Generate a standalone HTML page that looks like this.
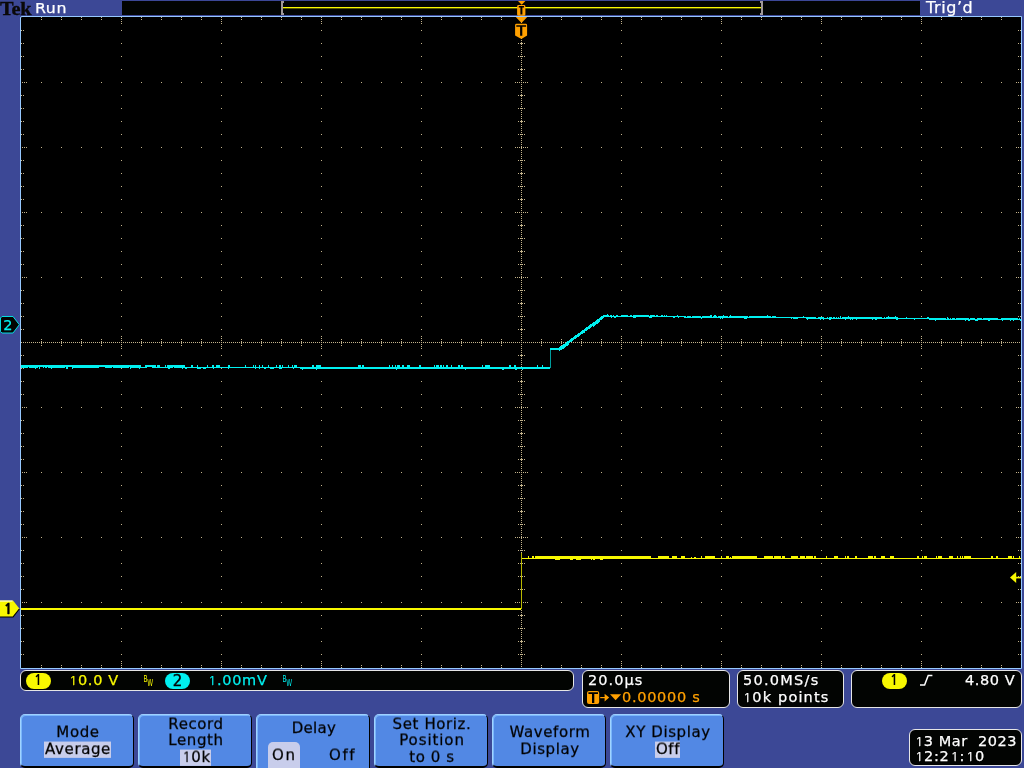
<!DOCTYPE html>
<html lang="en">
<head>
<meta charset="utf-8">
<title>Tek oscilloscope</title>
<style>
html,body{margin:0;padding:0;}
body{width:1024px;height:768px;overflow:hidden;background:#3c4896;position:relative;
 font-family:"DejaVu Sans","Liberation Sans",sans-serif;font-size:14.5px;color:#fff;}
.abs{position:absolute;}
.t{position:absolute;will-change:transform;white-space:pre;line-height:20px;height:20px;letter-spacing:.55px;-webkit-text-stroke:.25px currentColor;}
#tek{left:-0.4px;top:-2.9px;font-family:"Liberation Serif",serif;font-weight:bold;font-size:19.6px;color:#0a0808;letter-spacing:-0.3px;-webkit-text-stroke:.35px #0a0808;transform:scaleX(1.04);transform-origin:0 0;line-height:24px;height:24px;}
#topbar{left:122px;top:1px;width:798px;height:14px;background:#020402;}
#grat{left:20px;top:16px;width:1000px;height:651px;background:#000;border:1px solid #96c8ff;border-radius:2px 0 0 0;}
#scope{left:0;top:0;}
.box{position:absolute;background:#020402;border:1px solid #e6e6e6;border-radius:6px;box-sizing:border-box;}
.btn{position:absolute;top:714px;width:114px;height:54px;box-sizing:border-box;background:#5288e4;border-radius:5px;border-top:1px solid #a0d0ff;border-left:1px solid #a0d4ff;border-right:1px solid #000;border-bottom:2px solid #000;box-shadow:inset 1px 1px 0 #7ab6fb;color:#000;}
.btn .t{color:#000;text-align:center;left:0.8px;width:112px;margin-top:.9px;font-size:15px;letter-spacing:.6px;transform:scaleY(.96);transform-origin:0 15.2px;}
.hl{background:linear-gradient(transparent 1.5px,#c8cdeb 1.5px);padding-left:1.2px;margin-left:-1.2px;}
.onbox{background:#c8cdeb;border-radius:5px 5px 0 0;}
.btn.tall{height:60px;}
.one{font-family:"NanumGothic","Liberation Sans",sans-serif;font-size:13.2px;line-height:0;margin-left:1.2px;margin-right:0;}
.btn .one{font-size:13.6px;}
.pill{will-change:transform;position:absolute;width:25px;height:16px;border-radius:8px;color:#000;text-align:center;line-height:16px;font-size:15px;-webkit-text-stroke:.4px #000;}
.pill.p1{font-family:"NanumGothic","Liberation Sans",sans-serif;font-weight:bold;font-size:14.4px;-webkit-text-stroke:0;text-indent:-1px;line-height:15.6px;}
</style>
</head>
<body>
<div id="tek" class="t">Tek</div>
<div class="t" style="left:34.9px;top:-2.4px;font-size:14.6px;transform:scaleX(1.08);transform-origin:0 0;">Run</div>
<div id="topbar" class="abs"></div>
<div class="t" style="left:925.6px;top:-2.2px;font-size:15px;transform:scaleX(1.065);transform-origin:0 0;">Trig’d</div>
<div id="grat" class="abs"></div>
<svg id="scope" class="abs" width="1024" height="768" viewBox="0 0 1024 768" shape-rendering="crispEdges">
<path fill="#c4b48c" d="M41 17h1v1h-1zM61 17h1v1h-1zM81 17h1v1h-1zM101 17h1v1h-1zM121 17h1v1h-1zM141 17h1v1h-1zM161 17h1v1h-1zM181 17h1v1h-1zM201 17h1v1h-1zM221 17h1v1h-1zM241 17h1v1h-1zM261 17h1v1h-1zM281 17h1v1h-1zM301 17h1v1h-1zM321 17h1v1h-1zM341 17h1v1h-1zM361 17h1v1h-1zM381 17h1v1h-1zM401 17h1v1h-1zM421 17h1v1h-1zM441 17h1v1h-1zM461 17h1v1h-1zM481 17h1v1h-1zM501 17h1v1h-1zM541 17h1v1h-1zM561 17h1v1h-1zM581 17h1v1h-1zM601 17h1v1h-1zM621 17h1v1h-1zM641 17h1v1h-1zM661 17h1v1h-1zM681 17h1v1h-1zM701 17h1v1h-1zM721 17h1v1h-1zM741 17h1v1h-1zM761 17h1v1h-1zM781 17h1v1h-1zM801 17h1v1h-1zM821 17h1v1h-1zM841 17h1v1h-1zM861 17h1v1h-1zM881 17h1v1h-1zM901 17h1v1h-1zM921 17h1v1h-1zM941 17h1v1h-1zM961 17h1v1h-1zM981 17h1v1h-1zM1001 17h1v1h-1zM521 18h1v1h-1zM41 19h1v1h-1zM61 19h1v1h-1zM81 19h1v1h-1zM101 19h1v1h-1zM121 19h1v1h-1zM141 19h1v1h-1zM161 19h1v1h-1zM181 19h1v1h-1zM201 19h1v1h-1zM221 19h1v1h-1zM241 19h1v1h-1zM261 19h1v1h-1zM281 19h1v1h-1zM301 19h1v1h-1zM321 19h1v1h-1zM341 19h1v1h-1zM361 19h1v1h-1zM381 19h1v1h-1zM401 19h1v1h-1zM421 19h1v1h-1zM441 19h1v1h-1zM461 19h1v1h-1zM481 19h1v1h-1zM501 19h1v1h-1zM541 19h1v1h-1zM561 19h1v1h-1zM581 19h1v1h-1zM601 19h1v1h-1zM621 19h1v1h-1zM641 19h1v1h-1zM661 19h1v1h-1zM681 19h1v1h-1zM701 19h1v1h-1zM721 19h1v1h-1zM741 19h1v1h-1zM761 19h1v1h-1zM781 19h1v1h-1zM801 19h1v1h-1zM821 19h1v1h-1zM841 19h1v1h-1zM861 19h1v1h-1zM881 19h1v1h-1zM901 19h1v1h-1zM921 19h1v1h-1zM941 19h1v1h-1zM961 19h1v1h-1zM981 19h1v1h-1zM1001 19h1v1h-1zM521 20h1v1h-1zM121 21h1v1h-1zM221 21h1v1h-1zM321 21h1v1h-1zM421 21h1v1h-1zM621 21h1v1h-1zM721 21h1v1h-1zM821 21h1v1h-1zM921 21h1v1h-1zM521 22h1v1h-1zM121 23h1v1h-1zM221 23h1v1h-1zM321 23h1v1h-1zM421 23h1v1h-1zM621 23h1v1h-1zM721 23h1v1h-1zM821 23h1v1h-1zM921 23h1v1h-1zM521 24h1v1h-1zM521 26h1v1h-1zM521 28h1v1h-1zM21 30h1v1h-1zM23 30h1v1h-1zM121 30h1v1h-1zM221 30h1v1h-1zM321 30h1v1h-1zM421 30h1v1h-1zM518 30h1v1h-1zM520 30h3v1h-3zM524 30h1v1h-1zM621 30h1v1h-1zM721 30h1v1h-1zM821 30h1v1h-1zM921 30h1v1h-1zM1018 30h1v1h-1zM1020 30h1v1h-1zM521 32h1v1h-1zM521 34h1v1h-1zM521 36h1v1h-1zM521 38h1v1h-1zM521 40h1v1h-1zM521 42h1v1h-1zM21 43h1v1h-1zM23 43h1v1h-1zM121 43h1v1h-1zM221 43h1v1h-1zM321 43h1v1h-1zM421 43h1v1h-1zM518 43h1v1h-1zM520 43h3v1h-3zM524 43h1v1h-1zM621 43h1v1h-1zM721 43h1v1h-1zM821 43h1v1h-1zM921 43h1v1h-1zM1018 43h1v1h-1zM1020 43h1v1h-1zM521 44h1v1h-1zM521 46h1v1h-1zM521 48h1v1h-1zM521 50h1v1h-1zM521 52h1v1h-1zM521 54h1v1h-1zM21 56h1v1h-1zM23 56h1v1h-1zM121 56h1v1h-1zM221 56h1v1h-1zM321 56h1v1h-1zM421 56h1v1h-1zM518 56h1v1h-1zM520 56h3v1h-3zM524 56h1v1h-1zM621 56h1v1h-1zM721 56h1v1h-1zM821 56h1v1h-1zM921 56h1v1h-1zM1018 56h1v1h-1zM1020 56h1v1h-1zM521 58h1v1h-1zM521 60h1v1h-1zM521 62h1v1h-1zM521 64h1v1h-1zM521 66h1v1h-1zM521 68h1v1h-1zM21 69h1v1h-1zM23 69h1v1h-1zM121 69h1v1h-1zM221 69h1v1h-1zM321 69h1v1h-1zM421 69h1v1h-1zM518 69h1v1h-1zM520 69h3v1h-3zM524 69h1v1h-1zM621 69h1v1h-1zM721 69h1v1h-1zM821 69h1v1h-1zM921 69h1v1h-1zM1018 69h1v1h-1zM1020 69h1v1h-1zM521 70h1v1h-1zM521 72h1v1h-1zM521 74h1v1h-1zM521 76h1v1h-1zM521 78h1v1h-1zM521 80h1v1h-1zM22 82h1v1h-1zM24 82h1v1h-1zM26 82h1v1h-1zM41 82h1v1h-1zM61 82h1v1h-1zM81 82h1v1h-1zM101 82h1v1h-1zM121 82h1v1h-1zM141 82h1v1h-1zM161 82h1v1h-1zM181 82h1v1h-1zM201 82h1v1h-1zM221 82h1v1h-1zM241 82h1v1h-1zM261 82h1v1h-1zM281 82h1v1h-1zM301 82h1v1h-1zM321 82h1v1h-1zM341 82h1v1h-1zM361 82h1v1h-1zM381 82h1v1h-1zM401 82h1v1h-1zM421 82h1v1h-1zM441 82h1v1h-1zM461 82h1v1h-1zM481 82h1v1h-1zM501 82h1v1h-1zM515 82h1v1h-1zM517 82h1v1h-1zM519 82h1v1h-1zM521 82h1v1h-1zM523 82h1v1h-1zM525 82h1v1h-1zM527 82h1v1h-1zM541 82h1v1h-1zM561 82h1v1h-1zM581 82h1v1h-1zM601 82h1v1h-1zM621 82h1v1h-1zM641 82h1v1h-1zM661 82h1v1h-1zM681 82h1v1h-1zM701 82h1v1h-1zM721 82h1v1h-1zM741 82h1v1h-1zM761 82h1v1h-1zM781 82h1v1h-1zM801 82h1v1h-1zM821 82h1v1h-1zM841 82h1v1h-1zM861 82h1v1h-1zM881 82h1v1h-1zM901 82h1v1h-1zM921 82h1v1h-1zM941 82h1v1h-1zM961 82h1v1h-1zM981 82h1v1h-1zM1001 82h1v1h-1zM1016 82h1v1h-1zM1018 82h1v1h-1zM1020 82h1v1h-1zM521 84h1v1h-1zM521 86h1v1h-1zM521 88h1v1h-1zM521 90h1v1h-1zM521 92h1v1h-1zM521 94h1v1h-1zM21 95h1v1h-1zM23 95h1v1h-1zM121 95h1v1h-1zM221 95h1v1h-1zM321 95h1v1h-1zM421 95h1v1h-1zM518 95h1v1h-1zM520 95h3v1h-3zM524 95h1v1h-1zM621 95h1v1h-1zM721 95h1v1h-1zM821 95h1v1h-1zM921 95h1v1h-1zM1018 95h1v1h-1zM1020 95h1v1h-1zM521 96h1v1h-1zM521 98h1v1h-1zM521 100h1v1h-1zM521 102h1v1h-1zM521 104h1v1h-1zM521 106h1v1h-1zM21 108h1v1h-1zM23 108h1v1h-1zM121 108h1v1h-1zM221 108h1v1h-1zM321 108h1v1h-1zM421 108h1v1h-1zM518 108h1v1h-1zM520 108h3v1h-3zM524 108h1v1h-1zM621 108h1v1h-1zM721 108h1v1h-1zM821 108h1v1h-1zM921 108h1v1h-1zM1018 108h1v1h-1zM1020 108h1v1h-1zM521 110h1v1h-1zM521 112h1v1h-1zM521 114h1v1h-1zM521 116h1v1h-1zM521 118h1v1h-1zM521 120h1v1h-1zM21 121h1v1h-1zM23 121h1v1h-1zM121 121h1v1h-1zM221 121h1v1h-1zM321 121h1v1h-1zM421 121h1v1h-1zM518 121h1v1h-1zM520 121h3v1h-3zM524 121h1v1h-1zM621 121h1v1h-1zM721 121h1v1h-1zM821 121h1v1h-1zM921 121h1v1h-1zM1018 121h1v1h-1zM1020 121h1v1h-1zM521 122h1v1h-1zM521 124h1v1h-1zM521 126h1v1h-1zM521 128h1v1h-1zM521 130h1v1h-1zM521 132h1v1h-1zM21 134h1v1h-1zM23 134h1v1h-1zM121 134h1v1h-1zM221 134h1v1h-1zM321 134h1v1h-1zM421 134h1v1h-1zM518 134h1v1h-1zM520 134h3v1h-3zM524 134h1v1h-1zM621 134h1v1h-1zM721 134h1v1h-1zM821 134h1v1h-1zM921 134h1v1h-1zM1018 134h1v1h-1zM1020 134h1v1h-1zM521 136h1v1h-1zM521 138h1v1h-1zM521 140h1v1h-1zM521 142h1v1h-1zM521 144h1v1h-1zM521 146h1v1h-1zM22 147h1v1h-1zM24 147h1v1h-1zM26 147h1v1h-1zM41 147h1v1h-1zM61 147h1v1h-1zM81 147h1v1h-1zM101 147h1v1h-1zM121 147h1v1h-1zM141 147h1v1h-1zM161 147h1v1h-1zM181 147h1v1h-1zM201 147h1v1h-1zM221 147h1v1h-1zM241 147h1v1h-1zM261 147h1v1h-1zM281 147h1v1h-1zM301 147h1v1h-1zM321 147h1v1h-1zM341 147h1v1h-1zM361 147h1v1h-1zM381 147h1v1h-1zM401 147h1v1h-1zM421 147h1v1h-1zM441 147h1v1h-1zM461 147h1v1h-1zM481 147h1v1h-1zM501 147h1v1h-1zM515 147h1v1h-1zM517 147h1v1h-1zM519 147h1v1h-1zM521 147h1v1h-1zM523 147h1v1h-1zM525 147h1v1h-1zM527 147h1v1h-1zM541 147h1v1h-1zM561 147h1v1h-1zM581 147h1v1h-1zM601 147h1v1h-1zM621 147h1v1h-1zM641 147h1v1h-1zM661 147h1v1h-1zM681 147h1v1h-1zM701 147h1v1h-1zM721 147h1v1h-1zM741 147h1v1h-1zM761 147h1v1h-1zM781 147h1v1h-1zM801 147h1v1h-1zM821 147h1v1h-1zM841 147h1v1h-1zM861 147h1v1h-1zM881 147h1v1h-1zM901 147h1v1h-1zM921 147h1v1h-1zM941 147h1v1h-1zM961 147h1v1h-1zM981 147h1v1h-1zM1001 147h1v1h-1zM1016 147h1v1h-1zM1018 147h1v1h-1zM1020 147h1v1h-1zM521 148h1v1h-1zM521 150h1v1h-1zM521 152h1v1h-1zM521 154h1v1h-1zM521 156h1v1h-1zM521 158h1v1h-1zM21 160h1v1h-1zM23 160h1v1h-1zM121 160h1v1h-1zM221 160h1v1h-1zM321 160h1v1h-1zM421 160h1v1h-1zM518 160h1v1h-1zM520 160h3v1h-3zM524 160h1v1h-1zM621 160h1v1h-1zM721 160h1v1h-1zM821 160h1v1h-1zM921 160h1v1h-1zM1018 160h1v1h-1zM1020 160h1v1h-1zM521 162h1v1h-1zM521 164h1v1h-1zM521 166h1v1h-1zM521 168h1v1h-1zM521 170h1v1h-1zM521 172h1v1h-1zM21 173h1v1h-1zM23 173h1v1h-1zM121 173h1v1h-1zM221 173h1v1h-1zM321 173h1v1h-1zM421 173h1v1h-1zM518 173h1v1h-1zM520 173h3v1h-3zM524 173h1v1h-1zM621 173h1v1h-1zM721 173h1v1h-1zM821 173h1v1h-1zM921 173h1v1h-1zM1018 173h1v1h-1zM1020 173h1v1h-1zM521 174h1v1h-1zM521 176h1v1h-1zM521 178h1v1h-1zM521 180h1v1h-1zM521 182h1v1h-1zM521 184h1v1h-1zM21 186h1v1h-1zM23 186h1v1h-1zM121 186h1v1h-1zM221 186h1v1h-1zM321 186h1v1h-1zM421 186h1v1h-1zM518 186h1v1h-1zM520 186h3v1h-3zM524 186h1v1h-1zM621 186h1v1h-1zM721 186h1v1h-1zM821 186h1v1h-1zM921 186h1v1h-1zM1018 186h1v1h-1zM1020 186h1v1h-1zM521 188h1v1h-1zM521 190h1v1h-1zM521 192h1v1h-1zM521 194h1v1h-1zM521 196h1v1h-1zM521 198h1v1h-1zM21 199h1v1h-1zM23 199h1v1h-1zM121 199h1v1h-1zM221 199h1v1h-1zM321 199h1v1h-1zM421 199h1v1h-1zM518 199h1v1h-1zM520 199h3v1h-3zM524 199h1v1h-1zM621 199h1v1h-1zM721 199h1v1h-1zM821 199h1v1h-1zM921 199h1v1h-1zM1018 199h1v1h-1zM1020 199h1v1h-1zM521 200h1v1h-1zM521 202h1v1h-1zM521 204h1v1h-1zM521 206h1v1h-1zM521 208h1v1h-1zM521 210h1v1h-1zM22 212h1v1h-1zM24 212h1v1h-1zM26 212h1v1h-1zM41 212h1v1h-1zM61 212h1v1h-1zM81 212h1v1h-1zM101 212h1v1h-1zM121 212h1v1h-1zM141 212h1v1h-1zM161 212h1v1h-1zM181 212h1v1h-1zM201 212h1v1h-1zM221 212h1v1h-1zM241 212h1v1h-1zM261 212h1v1h-1zM281 212h1v1h-1zM301 212h1v1h-1zM321 212h1v1h-1zM341 212h1v1h-1zM361 212h1v1h-1zM381 212h1v1h-1zM401 212h1v1h-1zM421 212h1v1h-1zM441 212h1v1h-1zM461 212h1v1h-1zM481 212h1v1h-1zM501 212h1v1h-1zM515 212h1v1h-1zM517 212h1v1h-1zM519 212h1v1h-1zM521 212h1v1h-1zM523 212h1v1h-1zM525 212h1v1h-1zM527 212h1v1h-1zM541 212h1v1h-1zM561 212h1v1h-1zM581 212h1v1h-1zM601 212h1v1h-1zM621 212h1v1h-1zM641 212h1v1h-1zM661 212h1v1h-1zM681 212h1v1h-1zM701 212h1v1h-1zM721 212h1v1h-1zM741 212h1v1h-1zM761 212h1v1h-1zM781 212h1v1h-1zM801 212h1v1h-1zM821 212h1v1h-1zM841 212h1v1h-1zM861 212h1v1h-1zM881 212h1v1h-1zM901 212h1v1h-1zM921 212h1v1h-1zM941 212h1v1h-1zM961 212h1v1h-1zM981 212h1v1h-1zM1001 212h1v1h-1zM1016 212h1v1h-1zM1018 212h1v1h-1zM1020 212h1v1h-1zM521 214h1v1h-1zM521 216h1v1h-1zM521 218h1v1h-1zM521 220h1v1h-1zM521 222h1v1h-1zM521 224h1v1h-1zM21 225h1v1h-1zM23 225h1v1h-1zM121 225h1v1h-1zM221 225h1v1h-1zM321 225h1v1h-1zM421 225h1v1h-1zM518 225h1v1h-1zM520 225h3v1h-3zM524 225h1v1h-1zM621 225h1v1h-1zM721 225h1v1h-1zM821 225h1v1h-1zM921 225h1v1h-1zM1018 225h1v1h-1zM1020 225h1v1h-1zM521 226h1v1h-1zM521 228h1v1h-1zM521 230h1v1h-1zM521 232h1v1h-1zM521 234h1v1h-1zM521 236h1v1h-1zM21 238h1v1h-1zM23 238h1v1h-1zM121 238h1v1h-1zM221 238h1v1h-1zM321 238h1v1h-1zM421 238h1v1h-1zM518 238h1v1h-1zM520 238h3v1h-3zM524 238h1v1h-1zM621 238h1v1h-1zM721 238h1v1h-1zM821 238h1v1h-1zM921 238h1v1h-1zM1018 238h1v1h-1zM1020 238h1v1h-1zM521 240h1v1h-1zM521 242h1v1h-1zM521 244h1v1h-1zM521 246h1v1h-1zM521 248h1v1h-1zM521 250h1v1h-1zM21 251h1v1h-1zM23 251h1v1h-1zM121 251h1v1h-1zM221 251h1v1h-1zM321 251h1v1h-1zM421 251h1v1h-1zM518 251h1v1h-1zM520 251h3v1h-3zM524 251h1v1h-1zM621 251h1v1h-1zM721 251h1v1h-1zM821 251h1v1h-1zM921 251h1v1h-1zM1018 251h1v1h-1zM1020 251h1v1h-1zM521 252h1v1h-1zM521 254h1v1h-1zM521 256h1v1h-1zM521 258h1v1h-1zM521 260h1v1h-1zM521 262h1v1h-1zM21 264h1v1h-1zM23 264h1v1h-1zM121 264h1v1h-1zM221 264h1v1h-1zM321 264h1v1h-1zM421 264h1v1h-1zM518 264h1v1h-1zM520 264h3v1h-3zM524 264h1v1h-1zM621 264h1v1h-1zM721 264h1v1h-1zM821 264h1v1h-1zM921 264h1v1h-1zM1018 264h1v1h-1zM1020 264h1v1h-1zM521 266h1v1h-1zM521 268h1v1h-1zM521 270h1v1h-1zM521 272h1v1h-1zM521 274h1v1h-1zM521 276h1v1h-1zM22 277h1v1h-1zM24 277h1v1h-1zM26 277h1v1h-1zM41 277h1v1h-1zM61 277h1v1h-1zM81 277h1v1h-1zM101 277h1v1h-1zM121 277h1v1h-1zM141 277h1v1h-1zM161 277h1v1h-1zM181 277h1v1h-1zM201 277h1v1h-1zM221 277h1v1h-1zM241 277h1v1h-1zM261 277h1v1h-1zM281 277h1v1h-1zM301 277h1v1h-1zM321 277h1v1h-1zM341 277h1v1h-1zM361 277h1v1h-1zM381 277h1v1h-1zM401 277h1v1h-1zM421 277h1v1h-1zM441 277h1v1h-1zM461 277h1v1h-1zM481 277h1v1h-1zM501 277h1v1h-1zM515 277h1v1h-1zM517 277h1v1h-1zM519 277h1v1h-1zM521 277h1v1h-1zM523 277h1v1h-1zM525 277h1v1h-1zM527 277h1v1h-1zM541 277h1v1h-1zM561 277h1v1h-1zM581 277h1v1h-1zM601 277h1v1h-1zM621 277h1v1h-1zM641 277h1v1h-1zM661 277h1v1h-1zM681 277h1v1h-1zM701 277h1v1h-1zM721 277h1v1h-1zM741 277h1v1h-1zM761 277h1v1h-1zM781 277h1v1h-1zM801 277h1v1h-1zM821 277h1v1h-1zM841 277h1v1h-1zM861 277h1v1h-1zM881 277h1v1h-1zM901 277h1v1h-1zM921 277h1v1h-1zM941 277h1v1h-1zM961 277h1v1h-1zM981 277h1v1h-1zM1001 277h1v1h-1zM1016 277h1v1h-1zM1018 277h1v1h-1zM1020 277h1v1h-1zM521 278h1v1h-1zM521 280h1v1h-1zM521 282h1v1h-1zM521 284h1v1h-1zM521 286h1v1h-1zM521 288h1v1h-1zM21 290h1v1h-1zM23 290h1v1h-1zM121 290h1v1h-1zM221 290h1v1h-1zM321 290h1v1h-1zM421 290h1v1h-1zM518 290h1v1h-1zM520 290h3v1h-3zM524 290h1v1h-1zM621 290h1v1h-1zM721 290h1v1h-1zM821 290h1v1h-1zM921 290h1v1h-1zM1018 290h1v1h-1zM1020 290h1v1h-1zM521 292h1v1h-1zM521 294h1v1h-1zM521 296h1v1h-1zM521 298h1v1h-1zM521 300h1v1h-1zM521 302h1v1h-1zM21 303h1v1h-1zM23 303h1v1h-1zM121 303h1v1h-1zM221 303h1v1h-1zM321 303h1v1h-1zM421 303h1v1h-1zM518 303h1v1h-1zM520 303h3v1h-3zM524 303h1v1h-1zM621 303h1v1h-1zM721 303h1v1h-1zM821 303h1v1h-1zM921 303h1v1h-1zM1018 303h1v1h-1zM1020 303h1v1h-1zM521 304h1v1h-1zM521 306h1v1h-1zM521 308h1v1h-1zM521 310h1v1h-1zM521 312h1v1h-1zM521 314h1v1h-1zM21 316h1v1h-1zM23 316h1v1h-1zM121 316h1v1h-1zM221 316h1v1h-1zM321 316h1v1h-1zM421 316h1v1h-1zM518 316h1v1h-1zM520 316h3v1h-3zM524 316h1v1h-1zM621 316h1v1h-1zM721 316h1v1h-1zM821 316h1v1h-1zM921 316h1v1h-1zM1018 316h1v1h-1zM1020 316h1v1h-1zM521 318h1v1h-1zM521 320h1v1h-1zM521 322h1v1h-1zM521 324h1v1h-1zM521 326h1v1h-1zM521 328h1v1h-1zM21 329h1v1h-1zM23 329h1v1h-1zM121 329h1v1h-1zM221 329h1v1h-1zM321 329h1v1h-1zM421 329h1v1h-1zM518 329h1v1h-1zM520 329h3v1h-3zM524 329h1v1h-1zM621 329h1v1h-1zM721 329h1v1h-1zM821 329h1v1h-1zM921 329h1v1h-1zM1018 329h1v1h-1zM1020 329h1v1h-1zM521 330h1v1h-1zM521 332h1v1h-1zM521 334h1v1h-1zM121 336h1v1h-1zM221 336h1v1h-1zM321 336h1v1h-1zM421 336h1v1h-1zM521 336h1v1h-1zM621 336h1v1h-1zM721 336h1v1h-1zM821 336h1v1h-1zM921 336h1v1h-1zM121 338h1v1h-1zM221 338h1v1h-1zM321 338h1v1h-1zM421 338h1v1h-1zM521 338h1v1h-1zM621 338h1v1h-1zM721 338h1v1h-1zM821 338h1v1h-1zM921 338h1v1h-1zM41 339h1v1h-1zM61 339h1v1h-1zM81 339h1v1h-1zM101 339h1v1h-1zM141 339h1v1h-1zM161 339h1v1h-1zM181 339h1v1h-1zM201 339h1v1h-1zM241 339h1v1h-1zM261 339h1v1h-1zM281 339h1v1h-1zM301 339h1v1h-1zM341 339h1v1h-1zM361 339h1v1h-1zM381 339h1v1h-1zM401 339h1v1h-1zM441 339h1v1h-1zM461 339h1v1h-1zM481 339h1v1h-1zM501 339h1v1h-1zM541 339h1v1h-1zM561 339h1v1h-1zM581 339h1v1h-1zM601 339h1v1h-1zM641 339h1v1h-1zM661 339h1v1h-1zM681 339h1v1h-1zM701 339h1v1h-1zM741 339h1v1h-1zM761 339h1v1h-1zM781 339h1v1h-1zM801 339h1v1h-1zM841 339h1v1h-1zM861 339h1v1h-1zM881 339h1v1h-1zM901 339h1v1h-1zM941 339h1v1h-1zM961 339h1v1h-1zM981 339h1v1h-1zM1001 339h1v1h-1zM121 340h1v1h-1zM221 340h1v1h-1zM321 340h1v1h-1zM421 340h1v1h-1zM521 340h1v1h-1zM621 340h1v1h-1zM721 340h1v1h-1zM821 340h1v1h-1zM921 340h1v1h-1zM41 341h1v1h-1zM61 341h1v1h-1zM81 341h1v1h-1zM101 341h1v1h-1zM141 341h1v1h-1zM161 341h1v1h-1zM181 341h1v1h-1zM201 341h1v1h-1zM241 341h1v1h-1zM261 341h1v1h-1zM281 341h1v1h-1zM301 341h1v1h-1zM341 341h1v1h-1zM361 341h1v1h-1zM381 341h1v1h-1zM401 341h1v1h-1zM441 341h1v1h-1zM461 341h1v1h-1zM481 341h1v1h-1zM501 341h1v1h-1zM541 341h1v1h-1zM561 341h1v1h-1zM581 341h1v1h-1zM601 341h1v1h-1zM641 341h1v1h-1zM661 341h1v1h-1zM681 341h1v1h-1zM701 341h1v1h-1zM741 341h1v1h-1zM761 341h1v1h-1zM781 341h1v1h-1zM801 341h1v1h-1zM841 341h1v1h-1zM861 341h1v1h-1zM881 341h1v1h-1zM901 341h1v1h-1zM941 341h1v1h-1zM961 341h1v1h-1zM981 341h1v1h-1zM1001 341h1v1h-1zM21 342h1v1h-1zM23 342h1v1h-1zM25 342h1v1h-1zM27 342h1v1h-1zM29 342h1v1h-1zM31 342h1v1h-1zM33 342h1v1h-1zM35 342h1v1h-1zM37 342h1v1h-1zM39 342h1v1h-1zM41 342h1v1h-1zM43 342h1v1h-1zM45 342h1v1h-1zM47 342h1v1h-1zM49 342h1v1h-1zM51 342h1v1h-1zM53 342h1v1h-1zM55 342h1v1h-1zM57 342h1v1h-1zM59 342h1v1h-1zM61 342h1v1h-1zM63 342h1v1h-1zM65 342h1v1h-1zM67 342h1v1h-1zM69 342h1v1h-1zM71 342h1v1h-1zM73 342h1v1h-1zM75 342h1v1h-1zM77 342h1v1h-1zM79 342h1v1h-1zM81 342h1v1h-1zM83 342h1v1h-1zM85 342h1v1h-1zM87 342h1v1h-1zM89 342h1v1h-1zM91 342h1v1h-1zM93 342h1v1h-1zM95 342h1v1h-1zM97 342h1v1h-1zM99 342h1v1h-1zM101 342h1v1h-1zM103 342h1v1h-1zM105 342h1v1h-1zM107 342h1v1h-1zM109 342h1v1h-1zM111 342h1v1h-1zM113 342h1v1h-1zM115 342h1v1h-1zM117 342h1v1h-1zM119 342h1v1h-1zM121 342h1v1h-1zM123 342h1v1h-1zM125 342h1v1h-1zM127 342h1v1h-1zM129 342h1v1h-1zM131 342h1v1h-1zM133 342h1v1h-1zM135 342h1v1h-1zM137 342h1v1h-1zM139 342h1v1h-1zM141 342h1v1h-1zM143 342h1v1h-1zM145 342h1v1h-1zM147 342h1v1h-1zM149 342h1v1h-1zM151 342h1v1h-1zM153 342h1v1h-1zM155 342h1v1h-1zM157 342h1v1h-1zM159 342h1v1h-1zM161 342h1v1h-1zM163 342h1v1h-1zM165 342h1v1h-1zM167 342h1v1h-1zM169 342h1v1h-1zM171 342h1v1h-1zM173 342h1v1h-1zM175 342h1v1h-1zM177 342h1v1h-1zM179 342h1v1h-1zM181 342h1v1h-1zM183 342h1v1h-1zM185 342h1v1h-1zM187 342h1v1h-1zM189 342h1v1h-1zM191 342h1v1h-1zM193 342h1v1h-1zM195 342h1v1h-1zM197 342h1v1h-1zM199 342h1v1h-1zM201 342h1v1h-1zM203 342h1v1h-1zM205 342h1v1h-1zM207 342h1v1h-1zM209 342h1v1h-1zM211 342h1v1h-1zM213 342h1v1h-1zM215 342h1v1h-1zM217 342h1v1h-1zM219 342h1v1h-1zM221 342h1v1h-1zM223 342h1v1h-1zM225 342h1v1h-1zM227 342h1v1h-1zM229 342h1v1h-1zM231 342h1v1h-1zM233 342h1v1h-1zM235 342h1v1h-1zM237 342h1v1h-1zM239 342h1v1h-1zM241 342h1v1h-1zM243 342h1v1h-1zM245 342h1v1h-1zM247 342h1v1h-1zM249 342h1v1h-1zM251 342h1v1h-1zM253 342h1v1h-1zM255 342h1v1h-1zM257 342h1v1h-1zM259 342h1v1h-1zM261 342h1v1h-1zM263 342h1v1h-1zM265 342h1v1h-1zM267 342h1v1h-1zM269 342h1v1h-1zM271 342h1v1h-1zM273 342h1v1h-1zM275 342h1v1h-1zM277 342h1v1h-1zM279 342h1v1h-1zM281 342h1v1h-1zM283 342h1v1h-1zM285 342h1v1h-1zM287 342h1v1h-1zM289 342h1v1h-1zM291 342h1v1h-1zM293 342h1v1h-1zM295 342h1v1h-1zM297 342h1v1h-1zM299 342h1v1h-1zM301 342h1v1h-1zM303 342h1v1h-1zM305 342h1v1h-1zM307 342h1v1h-1zM309 342h1v1h-1zM311 342h1v1h-1zM313 342h1v1h-1zM315 342h1v1h-1zM317 342h1v1h-1zM319 342h1v1h-1zM321 342h1v1h-1zM323 342h1v1h-1zM325 342h1v1h-1zM327 342h1v1h-1zM329 342h1v1h-1zM331 342h1v1h-1zM333 342h1v1h-1zM335 342h1v1h-1zM337 342h1v1h-1zM339 342h1v1h-1zM341 342h1v1h-1zM343 342h1v1h-1zM345 342h1v1h-1zM347 342h1v1h-1zM349 342h1v1h-1zM351 342h1v1h-1zM353 342h1v1h-1zM355 342h1v1h-1zM357 342h1v1h-1zM359 342h1v1h-1zM361 342h1v1h-1zM363 342h1v1h-1zM365 342h1v1h-1zM367 342h1v1h-1zM369 342h1v1h-1zM371 342h1v1h-1zM373 342h1v1h-1zM375 342h1v1h-1zM377 342h1v1h-1zM379 342h1v1h-1zM381 342h1v1h-1zM383 342h1v1h-1zM385 342h1v1h-1zM387 342h1v1h-1zM389 342h1v1h-1zM391 342h1v1h-1zM393 342h1v1h-1zM395 342h1v1h-1zM397 342h1v1h-1zM399 342h1v1h-1zM401 342h1v1h-1zM403 342h1v1h-1zM405 342h1v1h-1zM407 342h1v1h-1zM409 342h1v1h-1zM411 342h1v1h-1zM413 342h1v1h-1zM415 342h1v1h-1zM417 342h1v1h-1zM419 342h1v1h-1zM421 342h1v1h-1zM423 342h1v1h-1zM425 342h1v1h-1zM427 342h1v1h-1zM429 342h1v1h-1zM431 342h1v1h-1zM433 342h1v1h-1zM435 342h1v1h-1zM437 342h1v1h-1zM439 342h1v1h-1zM441 342h1v1h-1zM443 342h1v1h-1zM445 342h1v1h-1zM447 342h1v1h-1zM449 342h1v1h-1zM451 342h1v1h-1zM453 342h1v1h-1zM455 342h1v1h-1zM457 342h1v1h-1zM459 342h1v1h-1zM461 342h1v1h-1zM463 342h1v1h-1zM465 342h1v1h-1zM467 342h1v1h-1zM469 342h1v1h-1zM471 342h1v1h-1zM473 342h1v1h-1zM475 342h1v1h-1zM477 342h1v1h-1zM479 342h1v1h-1zM481 342h1v1h-1zM483 342h1v1h-1zM485 342h1v1h-1zM487 342h1v1h-1zM489 342h1v1h-1zM491 342h1v1h-1zM493 342h1v1h-1zM495 342h1v1h-1zM497 342h1v1h-1zM499 342h1v1h-1zM501 342h1v1h-1zM503 342h1v1h-1zM505 342h1v1h-1zM507 342h1v1h-1zM509 342h1v1h-1zM511 342h1v1h-1zM513 342h1v1h-1zM515 342h1v1h-1zM517 342h1v1h-1zM519 342h1v1h-1zM521 342h1v1h-1zM523 342h1v1h-1zM525 342h1v1h-1zM527 342h1v1h-1zM529 342h1v1h-1zM531 342h1v1h-1zM533 342h1v1h-1zM535 342h1v1h-1zM537 342h1v1h-1zM539 342h1v1h-1zM541 342h1v1h-1zM543 342h1v1h-1zM545 342h1v1h-1zM547 342h1v1h-1zM549 342h1v1h-1zM551 342h1v1h-1zM553 342h1v1h-1zM555 342h1v1h-1zM557 342h1v1h-1zM559 342h1v1h-1zM561 342h1v1h-1zM563 342h1v1h-1zM565 342h1v1h-1zM567 342h1v1h-1zM569 342h1v1h-1zM571 342h1v1h-1zM573 342h1v1h-1zM575 342h1v1h-1zM577 342h1v1h-1zM579 342h1v1h-1zM581 342h1v1h-1zM583 342h1v1h-1zM585 342h1v1h-1zM587 342h1v1h-1zM589 342h1v1h-1zM591 342h1v1h-1zM593 342h1v1h-1zM595 342h1v1h-1zM597 342h1v1h-1zM599 342h1v1h-1zM601 342h1v1h-1zM603 342h1v1h-1zM605 342h1v1h-1zM607 342h1v1h-1zM609 342h1v1h-1zM611 342h1v1h-1zM613 342h1v1h-1zM615 342h1v1h-1zM617 342h1v1h-1zM619 342h1v1h-1zM621 342h1v1h-1zM623 342h1v1h-1zM625 342h1v1h-1zM627 342h1v1h-1zM629 342h1v1h-1zM631 342h1v1h-1zM633 342h1v1h-1zM635 342h1v1h-1zM637 342h1v1h-1zM639 342h1v1h-1zM641 342h1v1h-1zM643 342h1v1h-1zM645 342h1v1h-1zM647 342h1v1h-1zM649 342h1v1h-1zM651 342h1v1h-1zM653 342h1v1h-1zM655 342h1v1h-1zM657 342h1v1h-1zM659 342h1v1h-1zM661 342h1v1h-1zM663 342h1v1h-1zM665 342h1v1h-1zM667 342h1v1h-1zM669 342h1v1h-1zM671 342h1v1h-1zM673 342h1v1h-1zM675 342h1v1h-1zM677 342h1v1h-1zM679 342h1v1h-1zM681 342h1v1h-1zM683 342h1v1h-1zM685 342h1v1h-1zM687 342h1v1h-1zM689 342h1v1h-1zM691 342h1v1h-1zM693 342h1v1h-1zM695 342h1v1h-1zM697 342h1v1h-1zM699 342h1v1h-1zM701 342h1v1h-1zM703 342h1v1h-1zM705 342h1v1h-1zM707 342h1v1h-1zM709 342h1v1h-1zM711 342h1v1h-1zM713 342h1v1h-1zM715 342h1v1h-1zM717 342h1v1h-1zM719 342h1v1h-1zM721 342h1v1h-1zM723 342h1v1h-1zM725 342h1v1h-1zM727 342h1v1h-1zM729 342h1v1h-1zM731 342h1v1h-1zM733 342h1v1h-1zM735 342h1v1h-1zM737 342h1v1h-1zM739 342h1v1h-1zM741 342h1v1h-1zM743 342h1v1h-1zM745 342h1v1h-1zM747 342h1v1h-1zM749 342h1v1h-1zM751 342h1v1h-1zM753 342h1v1h-1zM755 342h1v1h-1zM757 342h1v1h-1zM759 342h1v1h-1zM761 342h1v1h-1zM763 342h1v1h-1zM765 342h1v1h-1zM767 342h1v1h-1zM769 342h1v1h-1zM771 342h1v1h-1zM773 342h1v1h-1zM775 342h1v1h-1zM777 342h1v1h-1zM779 342h1v1h-1zM781 342h1v1h-1zM783 342h1v1h-1zM785 342h1v1h-1zM787 342h1v1h-1zM789 342h1v1h-1zM791 342h1v1h-1zM793 342h1v1h-1zM795 342h1v1h-1zM797 342h1v1h-1zM799 342h1v1h-1zM801 342h1v1h-1zM803 342h1v1h-1zM805 342h1v1h-1zM807 342h1v1h-1zM809 342h1v1h-1zM811 342h1v1h-1zM813 342h1v1h-1zM815 342h1v1h-1zM817 342h1v1h-1zM819 342h1v1h-1zM821 342h1v1h-1zM823 342h1v1h-1zM825 342h1v1h-1zM827 342h1v1h-1zM829 342h1v1h-1zM831 342h1v1h-1zM833 342h1v1h-1zM835 342h1v1h-1zM837 342h1v1h-1zM839 342h1v1h-1zM841 342h1v1h-1zM843 342h1v1h-1zM845 342h1v1h-1zM847 342h1v1h-1zM849 342h1v1h-1zM851 342h1v1h-1zM853 342h1v1h-1zM855 342h1v1h-1zM857 342h1v1h-1zM859 342h1v1h-1zM861 342h1v1h-1zM863 342h1v1h-1zM865 342h1v1h-1zM867 342h1v1h-1zM869 342h1v1h-1zM871 342h1v1h-1zM873 342h1v1h-1zM875 342h1v1h-1zM877 342h1v1h-1zM879 342h1v1h-1zM881 342h1v1h-1zM883 342h1v1h-1zM885 342h1v1h-1zM887 342h1v1h-1zM889 342h1v1h-1zM891 342h1v1h-1zM893 342h1v1h-1zM895 342h1v1h-1zM897 342h1v1h-1zM899 342h1v1h-1zM901 342h1v1h-1zM903 342h1v1h-1zM905 342h1v1h-1zM907 342h1v1h-1zM909 342h1v1h-1zM911 342h1v1h-1zM913 342h1v1h-1zM915 342h1v1h-1zM917 342h1v1h-1zM919 342h1v1h-1zM921 342h1v1h-1zM923 342h1v1h-1zM925 342h1v1h-1zM927 342h1v1h-1zM929 342h1v1h-1zM931 342h1v1h-1zM933 342h1v1h-1zM935 342h1v1h-1zM937 342h1v1h-1zM939 342h1v1h-1zM941 342h1v1h-1zM943 342h1v1h-1zM945 342h1v1h-1zM947 342h1v1h-1zM949 342h1v1h-1zM951 342h1v1h-1zM953 342h1v1h-1zM955 342h1v1h-1zM957 342h1v1h-1zM959 342h1v1h-1zM961 342h1v1h-1zM963 342h1v1h-1zM965 342h1v1h-1zM967 342h1v1h-1zM969 342h1v1h-1zM971 342h1v1h-1zM973 342h1v1h-1zM975 342h1v1h-1zM977 342h1v1h-1zM979 342h1v1h-1zM981 342h1v1h-1zM983 342h1v1h-1zM985 342h1v1h-1zM987 342h1v1h-1zM989 342h1v1h-1zM991 342h1v1h-1zM993 342h1v1h-1zM995 342h1v1h-1zM997 342h1v1h-1zM999 342h1v1h-1zM1001 342h1v1h-1zM1003 342h1v1h-1zM1005 342h1v1h-1zM1007 342h1v1h-1zM1009 342h1v1h-1zM1011 342h1v1h-1zM1013 342h1v1h-1zM1015 342h1v1h-1zM1017 342h1v1h-1zM1019 342h1v1h-1zM41 343h1v1h-1zM61 343h1v1h-1zM81 343h1v1h-1zM101 343h1v1h-1zM141 343h1v1h-1zM161 343h1v1h-1zM181 343h1v1h-1zM201 343h1v1h-1zM241 343h1v1h-1zM261 343h1v1h-1zM281 343h1v1h-1zM301 343h1v1h-1zM341 343h1v1h-1zM361 343h1v1h-1zM381 343h1v1h-1zM401 343h1v1h-1zM441 343h1v1h-1zM461 343h1v1h-1zM481 343h1v1h-1zM501 343h1v1h-1zM541 343h1v1h-1zM561 343h1v1h-1zM581 343h1v1h-1zM601 343h1v1h-1zM641 343h1v1h-1zM661 343h1v1h-1zM681 343h1v1h-1zM701 343h1v1h-1zM741 343h1v1h-1zM761 343h1v1h-1zM781 343h1v1h-1zM801 343h1v1h-1zM841 343h1v1h-1zM861 343h1v1h-1zM881 343h1v1h-1zM901 343h1v1h-1zM941 343h1v1h-1zM961 343h1v1h-1zM981 343h1v1h-1zM1001 343h1v1h-1zM121 344h1v1h-1zM221 344h1v1h-1zM321 344h1v1h-1zM421 344h1v1h-1zM521 344h1v1h-1zM621 344h1v1h-1zM721 344h1v1h-1zM821 344h1v1h-1zM921 344h1v1h-1zM41 345h1v1h-1zM61 345h1v1h-1zM81 345h1v1h-1zM101 345h1v1h-1zM141 345h1v1h-1zM161 345h1v1h-1zM181 345h1v1h-1zM201 345h1v1h-1zM241 345h1v1h-1zM261 345h1v1h-1zM281 345h1v1h-1zM301 345h1v1h-1zM341 345h1v1h-1zM361 345h1v1h-1zM381 345h1v1h-1zM401 345h1v1h-1zM441 345h1v1h-1zM461 345h1v1h-1zM481 345h1v1h-1zM501 345h1v1h-1zM541 345h1v1h-1zM561 345h1v1h-1zM581 345h1v1h-1zM601 345h1v1h-1zM641 345h1v1h-1zM661 345h1v1h-1zM681 345h1v1h-1zM701 345h1v1h-1zM741 345h1v1h-1zM761 345h1v1h-1zM781 345h1v1h-1zM801 345h1v1h-1zM841 345h1v1h-1zM861 345h1v1h-1zM881 345h1v1h-1zM901 345h1v1h-1zM941 345h1v1h-1zM961 345h1v1h-1zM981 345h1v1h-1zM1001 345h1v1h-1zM121 346h1v1h-1zM221 346h1v1h-1zM321 346h1v1h-1zM421 346h1v1h-1zM521 346h1v1h-1zM621 346h1v1h-1zM721 346h1v1h-1zM821 346h1v1h-1zM921 346h1v1h-1zM121 348h1v1h-1zM221 348h1v1h-1zM321 348h1v1h-1zM421 348h1v1h-1zM521 348h1v1h-1zM621 348h1v1h-1zM721 348h1v1h-1zM821 348h1v1h-1zM921 348h1v1h-1zM521 350h1v1h-1zM521 352h1v1h-1zM521 354h1v1h-1zM21 355h1v1h-1zM23 355h1v1h-1zM121 355h1v1h-1zM221 355h1v1h-1zM321 355h1v1h-1zM421 355h1v1h-1zM518 355h1v1h-1zM520 355h3v1h-3zM524 355h1v1h-1zM621 355h1v1h-1zM721 355h1v1h-1zM821 355h1v1h-1zM921 355h1v1h-1zM1018 355h1v1h-1zM1020 355h1v1h-1zM521 356h1v1h-1zM521 358h1v1h-1zM521 360h1v1h-1zM521 362h1v1h-1zM521 364h1v1h-1zM521 366h1v1h-1zM21 368h1v1h-1zM23 368h1v1h-1zM121 368h1v1h-1zM221 368h1v1h-1zM321 368h1v1h-1zM421 368h1v1h-1zM518 368h1v1h-1zM520 368h3v1h-3zM524 368h1v1h-1zM621 368h1v1h-1zM721 368h1v1h-1zM821 368h1v1h-1zM921 368h1v1h-1zM1018 368h1v1h-1zM1020 368h1v1h-1zM521 370h1v1h-1zM521 372h1v1h-1zM521 374h1v1h-1zM521 376h1v1h-1zM521 378h1v1h-1zM521 380h1v1h-1zM21 381h1v1h-1zM23 381h1v1h-1zM121 381h1v1h-1zM221 381h1v1h-1zM321 381h1v1h-1zM421 381h1v1h-1zM518 381h1v1h-1zM520 381h3v1h-3zM524 381h1v1h-1zM621 381h1v1h-1zM721 381h1v1h-1zM821 381h1v1h-1zM921 381h1v1h-1zM1018 381h1v1h-1zM1020 381h1v1h-1zM521 382h1v1h-1zM521 384h1v1h-1zM521 386h1v1h-1zM521 388h1v1h-1zM521 390h1v1h-1zM521 392h1v1h-1zM21 394h1v1h-1zM23 394h1v1h-1zM121 394h1v1h-1zM221 394h1v1h-1zM321 394h1v1h-1zM421 394h1v1h-1zM518 394h1v1h-1zM520 394h3v1h-3zM524 394h1v1h-1zM621 394h1v1h-1zM721 394h1v1h-1zM821 394h1v1h-1zM921 394h1v1h-1zM1018 394h1v1h-1zM1020 394h1v1h-1zM521 396h1v1h-1zM521 398h1v1h-1zM521 400h1v1h-1zM521 402h1v1h-1zM521 404h1v1h-1zM521 406h1v1h-1zM22 407h1v1h-1zM24 407h1v1h-1zM26 407h1v1h-1zM41 407h1v1h-1zM61 407h1v1h-1zM81 407h1v1h-1zM101 407h1v1h-1zM121 407h1v1h-1zM141 407h1v1h-1zM161 407h1v1h-1zM181 407h1v1h-1zM201 407h1v1h-1zM221 407h1v1h-1zM241 407h1v1h-1zM261 407h1v1h-1zM281 407h1v1h-1zM301 407h1v1h-1zM321 407h1v1h-1zM341 407h1v1h-1zM361 407h1v1h-1zM381 407h1v1h-1zM401 407h1v1h-1zM421 407h1v1h-1zM441 407h1v1h-1zM461 407h1v1h-1zM481 407h1v1h-1zM501 407h1v1h-1zM515 407h1v1h-1zM517 407h1v1h-1zM519 407h1v1h-1zM521 407h1v1h-1zM523 407h1v1h-1zM525 407h1v1h-1zM527 407h1v1h-1zM541 407h1v1h-1zM561 407h1v1h-1zM581 407h1v1h-1zM601 407h1v1h-1zM621 407h1v1h-1zM641 407h1v1h-1zM661 407h1v1h-1zM681 407h1v1h-1zM701 407h1v1h-1zM721 407h1v1h-1zM741 407h1v1h-1zM761 407h1v1h-1zM781 407h1v1h-1zM801 407h1v1h-1zM821 407h1v1h-1zM841 407h1v1h-1zM861 407h1v1h-1zM881 407h1v1h-1zM901 407h1v1h-1zM921 407h1v1h-1zM941 407h1v1h-1zM961 407h1v1h-1zM981 407h1v1h-1zM1001 407h1v1h-1zM1016 407h1v1h-1zM1018 407h1v1h-1zM1020 407h1v1h-1zM521 408h1v1h-1zM521 410h1v1h-1zM521 412h1v1h-1zM521 414h1v1h-1zM521 416h1v1h-1zM521 418h1v1h-1zM21 420h1v1h-1zM23 420h1v1h-1zM121 420h1v1h-1zM221 420h1v1h-1zM321 420h1v1h-1zM421 420h1v1h-1zM518 420h1v1h-1zM520 420h3v1h-3zM524 420h1v1h-1zM621 420h1v1h-1zM721 420h1v1h-1zM821 420h1v1h-1zM921 420h1v1h-1zM1018 420h1v1h-1zM1020 420h1v1h-1zM521 422h1v1h-1zM521 424h1v1h-1zM521 426h1v1h-1zM521 428h1v1h-1zM521 430h1v1h-1zM521 432h1v1h-1zM21 433h1v1h-1zM23 433h1v1h-1zM121 433h1v1h-1zM221 433h1v1h-1zM321 433h1v1h-1zM421 433h1v1h-1zM518 433h1v1h-1zM520 433h3v1h-3zM524 433h1v1h-1zM621 433h1v1h-1zM721 433h1v1h-1zM821 433h1v1h-1zM921 433h1v1h-1zM1018 433h1v1h-1zM1020 433h1v1h-1zM521 434h1v1h-1zM521 436h1v1h-1zM521 438h1v1h-1zM521 440h1v1h-1zM521 442h1v1h-1zM521 444h1v1h-1zM21 446h1v1h-1zM23 446h1v1h-1zM121 446h1v1h-1zM221 446h1v1h-1zM321 446h1v1h-1zM421 446h1v1h-1zM518 446h1v1h-1zM520 446h3v1h-3zM524 446h1v1h-1zM621 446h1v1h-1zM721 446h1v1h-1zM821 446h1v1h-1zM921 446h1v1h-1zM1018 446h1v1h-1zM1020 446h1v1h-1zM521 448h1v1h-1zM521 450h1v1h-1zM521 452h1v1h-1zM521 454h1v1h-1zM521 456h1v1h-1zM521 458h1v1h-1zM21 459h1v1h-1zM23 459h1v1h-1zM121 459h1v1h-1zM221 459h1v1h-1zM321 459h1v1h-1zM421 459h1v1h-1zM518 459h1v1h-1zM520 459h3v1h-3zM524 459h1v1h-1zM621 459h1v1h-1zM721 459h1v1h-1zM821 459h1v1h-1zM921 459h1v1h-1zM1018 459h1v1h-1zM1020 459h1v1h-1zM521 460h1v1h-1zM521 462h1v1h-1zM521 464h1v1h-1zM521 466h1v1h-1zM521 468h1v1h-1zM521 470h1v1h-1zM22 472h1v1h-1zM24 472h1v1h-1zM26 472h1v1h-1zM41 472h1v1h-1zM61 472h1v1h-1zM81 472h1v1h-1zM101 472h1v1h-1zM121 472h1v1h-1zM141 472h1v1h-1zM161 472h1v1h-1zM181 472h1v1h-1zM201 472h1v1h-1zM221 472h1v1h-1zM241 472h1v1h-1zM261 472h1v1h-1zM281 472h1v1h-1zM301 472h1v1h-1zM321 472h1v1h-1zM341 472h1v1h-1zM361 472h1v1h-1zM381 472h1v1h-1zM401 472h1v1h-1zM421 472h1v1h-1zM441 472h1v1h-1zM461 472h1v1h-1zM481 472h1v1h-1zM501 472h1v1h-1zM515 472h1v1h-1zM517 472h1v1h-1zM519 472h1v1h-1zM521 472h1v1h-1zM523 472h1v1h-1zM525 472h1v1h-1zM527 472h1v1h-1zM541 472h1v1h-1zM561 472h1v1h-1zM581 472h1v1h-1zM601 472h1v1h-1zM621 472h1v1h-1zM641 472h1v1h-1zM661 472h1v1h-1zM681 472h1v1h-1zM701 472h1v1h-1zM721 472h1v1h-1zM741 472h1v1h-1zM761 472h1v1h-1zM781 472h1v1h-1zM801 472h1v1h-1zM821 472h1v1h-1zM841 472h1v1h-1zM861 472h1v1h-1zM881 472h1v1h-1zM901 472h1v1h-1zM921 472h1v1h-1zM941 472h1v1h-1zM961 472h1v1h-1zM981 472h1v1h-1zM1001 472h1v1h-1zM1016 472h1v1h-1zM1018 472h1v1h-1zM1020 472h1v1h-1zM521 474h1v1h-1zM521 476h1v1h-1zM521 478h1v1h-1zM521 480h1v1h-1zM521 482h1v1h-1zM521 484h1v1h-1zM21 485h1v1h-1zM23 485h1v1h-1zM121 485h1v1h-1zM221 485h1v1h-1zM321 485h1v1h-1zM421 485h1v1h-1zM518 485h1v1h-1zM520 485h3v1h-3zM524 485h1v1h-1zM621 485h1v1h-1zM721 485h1v1h-1zM821 485h1v1h-1zM921 485h1v1h-1zM1018 485h1v1h-1zM1020 485h1v1h-1zM521 486h1v1h-1zM521 488h1v1h-1zM521 490h1v1h-1zM521 492h1v1h-1zM521 494h1v1h-1zM521 496h1v1h-1zM21 498h1v1h-1zM23 498h1v1h-1zM121 498h1v1h-1zM221 498h1v1h-1zM321 498h1v1h-1zM421 498h1v1h-1zM518 498h1v1h-1zM520 498h3v1h-3zM524 498h1v1h-1zM621 498h1v1h-1zM721 498h1v1h-1zM821 498h1v1h-1zM921 498h1v1h-1zM1018 498h1v1h-1zM1020 498h1v1h-1zM521 500h1v1h-1zM521 502h1v1h-1zM521 504h1v1h-1zM521 506h1v1h-1zM521 508h1v1h-1zM521 510h1v1h-1zM21 511h1v1h-1zM23 511h1v1h-1zM121 511h1v1h-1zM221 511h1v1h-1zM321 511h1v1h-1zM421 511h1v1h-1zM518 511h1v1h-1zM520 511h3v1h-3zM524 511h1v1h-1zM621 511h1v1h-1zM721 511h1v1h-1zM821 511h1v1h-1zM921 511h1v1h-1zM1018 511h1v1h-1zM1020 511h1v1h-1zM521 512h1v1h-1zM521 514h1v1h-1zM521 516h1v1h-1zM521 518h1v1h-1zM521 520h1v1h-1zM521 522h1v1h-1zM21 524h1v1h-1zM23 524h1v1h-1zM121 524h1v1h-1zM221 524h1v1h-1zM321 524h1v1h-1zM421 524h1v1h-1zM518 524h1v1h-1zM520 524h3v1h-3zM524 524h1v1h-1zM621 524h1v1h-1zM721 524h1v1h-1zM821 524h1v1h-1zM921 524h1v1h-1zM1018 524h1v1h-1zM1020 524h1v1h-1zM521 526h1v1h-1zM521 528h1v1h-1zM521 530h1v1h-1zM521 532h1v1h-1zM521 534h1v1h-1zM521 536h1v1h-1zM22 537h1v1h-1zM24 537h1v1h-1zM26 537h1v1h-1zM41 537h1v1h-1zM61 537h1v1h-1zM81 537h1v1h-1zM101 537h1v1h-1zM121 537h1v1h-1zM141 537h1v1h-1zM161 537h1v1h-1zM181 537h1v1h-1zM201 537h1v1h-1zM221 537h1v1h-1zM241 537h1v1h-1zM261 537h1v1h-1zM281 537h1v1h-1zM301 537h1v1h-1zM321 537h1v1h-1zM341 537h1v1h-1zM361 537h1v1h-1zM381 537h1v1h-1zM401 537h1v1h-1zM421 537h1v1h-1zM441 537h1v1h-1zM461 537h1v1h-1zM481 537h1v1h-1zM501 537h1v1h-1zM515 537h1v1h-1zM517 537h1v1h-1zM519 537h1v1h-1zM521 537h1v1h-1zM523 537h1v1h-1zM525 537h1v1h-1zM527 537h1v1h-1zM541 537h1v1h-1zM561 537h1v1h-1zM581 537h1v1h-1zM601 537h1v1h-1zM621 537h1v1h-1zM641 537h1v1h-1zM661 537h1v1h-1zM681 537h1v1h-1zM701 537h1v1h-1zM721 537h1v1h-1zM741 537h1v1h-1zM761 537h1v1h-1zM781 537h1v1h-1zM801 537h1v1h-1zM821 537h1v1h-1zM841 537h1v1h-1zM861 537h1v1h-1zM881 537h1v1h-1zM901 537h1v1h-1zM921 537h1v1h-1zM941 537h1v1h-1zM961 537h1v1h-1zM981 537h1v1h-1zM1001 537h1v1h-1zM1016 537h1v1h-1zM1018 537h1v1h-1zM1020 537h1v1h-1zM521 538h1v1h-1zM521 540h1v1h-1zM521 542h1v1h-1zM521 544h1v1h-1zM521 546h1v1h-1zM521 548h1v1h-1zM21 550h1v1h-1zM23 550h1v1h-1zM121 550h1v1h-1zM221 550h1v1h-1zM321 550h1v1h-1zM421 550h1v1h-1zM518 550h1v1h-1zM520 550h3v1h-3zM524 550h1v1h-1zM621 550h1v1h-1zM721 550h1v1h-1zM821 550h1v1h-1zM921 550h1v1h-1zM1018 550h1v1h-1zM1020 550h1v1h-1zM521 552h1v1h-1zM521 554h1v1h-1zM521 556h1v1h-1zM521 558h1v1h-1zM521 560h1v1h-1zM521 562h1v1h-1zM21 563h1v1h-1zM23 563h1v1h-1zM121 563h1v1h-1zM221 563h1v1h-1zM321 563h1v1h-1zM421 563h1v1h-1zM518 563h1v1h-1zM520 563h3v1h-3zM524 563h1v1h-1zM621 563h1v1h-1zM721 563h1v1h-1zM821 563h1v1h-1zM921 563h1v1h-1zM1018 563h1v1h-1zM1020 563h1v1h-1zM521 564h1v1h-1zM521 566h1v1h-1zM521 568h1v1h-1zM521 570h1v1h-1zM521 572h1v1h-1zM521 574h1v1h-1zM21 576h1v1h-1zM23 576h1v1h-1zM121 576h1v1h-1zM221 576h1v1h-1zM321 576h1v1h-1zM421 576h1v1h-1zM518 576h1v1h-1zM520 576h3v1h-3zM524 576h1v1h-1zM621 576h1v1h-1zM721 576h1v1h-1zM821 576h1v1h-1zM921 576h1v1h-1zM1018 576h1v1h-1zM1020 576h1v1h-1zM521 578h1v1h-1zM521 580h1v1h-1zM521 582h1v1h-1zM521 584h1v1h-1zM521 586h1v1h-1zM521 588h1v1h-1zM21 589h1v1h-1zM23 589h1v1h-1zM121 589h1v1h-1zM221 589h1v1h-1zM321 589h1v1h-1zM421 589h1v1h-1zM518 589h1v1h-1zM520 589h3v1h-3zM524 589h1v1h-1zM621 589h1v1h-1zM721 589h1v1h-1zM821 589h1v1h-1zM921 589h1v1h-1zM1018 589h1v1h-1zM1020 589h1v1h-1zM521 590h1v1h-1zM521 592h1v1h-1zM521 594h1v1h-1zM521 596h1v1h-1zM521 598h1v1h-1zM521 600h1v1h-1zM22 602h1v1h-1zM24 602h1v1h-1zM26 602h1v1h-1zM41 602h1v1h-1zM61 602h1v1h-1zM81 602h1v1h-1zM101 602h1v1h-1zM121 602h1v1h-1zM141 602h1v1h-1zM161 602h1v1h-1zM181 602h1v1h-1zM201 602h1v1h-1zM221 602h1v1h-1zM241 602h1v1h-1zM261 602h1v1h-1zM281 602h1v1h-1zM301 602h1v1h-1zM321 602h1v1h-1zM341 602h1v1h-1zM361 602h1v1h-1zM381 602h1v1h-1zM401 602h1v1h-1zM421 602h1v1h-1zM441 602h1v1h-1zM461 602h1v1h-1zM481 602h1v1h-1zM501 602h1v1h-1zM515 602h1v1h-1zM517 602h1v1h-1zM519 602h1v1h-1zM521 602h1v1h-1zM523 602h1v1h-1zM525 602h1v1h-1zM527 602h1v1h-1zM541 602h1v1h-1zM561 602h1v1h-1zM581 602h1v1h-1zM601 602h1v1h-1zM621 602h1v1h-1zM641 602h1v1h-1zM661 602h1v1h-1zM681 602h1v1h-1zM701 602h1v1h-1zM721 602h1v1h-1zM741 602h1v1h-1zM761 602h1v1h-1zM781 602h1v1h-1zM801 602h1v1h-1zM821 602h1v1h-1zM841 602h1v1h-1zM861 602h1v1h-1zM881 602h1v1h-1zM901 602h1v1h-1zM921 602h1v1h-1zM941 602h1v1h-1zM961 602h1v1h-1zM981 602h1v1h-1zM1001 602h1v1h-1zM1016 602h1v1h-1zM1018 602h1v1h-1zM1020 602h1v1h-1zM521 604h1v1h-1zM521 606h1v1h-1zM521 608h1v1h-1zM521 610h1v1h-1zM521 612h1v1h-1zM521 614h1v1h-1zM21 615h1v1h-1zM23 615h1v1h-1zM121 615h1v1h-1zM221 615h1v1h-1zM321 615h1v1h-1zM421 615h1v1h-1zM518 615h1v1h-1zM520 615h3v1h-3zM524 615h1v1h-1zM621 615h1v1h-1zM721 615h1v1h-1zM821 615h1v1h-1zM921 615h1v1h-1zM1018 615h1v1h-1zM1020 615h1v1h-1zM521 616h1v1h-1zM521 618h1v1h-1zM521 620h1v1h-1zM521 622h1v1h-1zM521 624h1v1h-1zM521 626h1v1h-1zM21 628h1v1h-1zM23 628h1v1h-1zM121 628h1v1h-1zM221 628h1v1h-1zM321 628h1v1h-1zM421 628h1v1h-1zM518 628h1v1h-1zM520 628h3v1h-3zM524 628h1v1h-1zM621 628h1v1h-1zM721 628h1v1h-1zM821 628h1v1h-1zM921 628h1v1h-1zM1018 628h1v1h-1zM1020 628h1v1h-1zM521 630h1v1h-1zM521 632h1v1h-1zM521 634h1v1h-1zM521 636h1v1h-1zM521 638h1v1h-1zM521 640h1v1h-1zM21 641h1v1h-1zM23 641h1v1h-1zM121 641h1v1h-1zM221 641h1v1h-1zM321 641h1v1h-1zM421 641h1v1h-1zM518 641h1v1h-1zM520 641h3v1h-3zM524 641h1v1h-1zM621 641h1v1h-1zM721 641h1v1h-1zM821 641h1v1h-1zM921 641h1v1h-1zM1018 641h1v1h-1zM1020 641h1v1h-1zM521 642h1v1h-1zM521 644h1v1h-1zM521 646h1v1h-1zM521 648h1v1h-1zM521 650h1v1h-1zM521 652h1v1h-1zM21 654h1v1h-1zM23 654h1v1h-1zM121 654h1v1h-1zM221 654h1v1h-1zM321 654h1v1h-1zM421 654h1v1h-1zM518 654h1v1h-1zM520 654h3v1h-3zM524 654h1v1h-1zM621 654h1v1h-1zM721 654h1v1h-1zM821 654h1v1h-1zM921 654h1v1h-1zM1018 654h1v1h-1zM1020 654h1v1h-1zM521 656h1v1h-1zM521 658h1v1h-1zM521 660h1v1h-1zM121 661h1v1h-1zM221 661h1v1h-1zM321 661h1v1h-1zM421 661h1v1h-1zM621 661h1v1h-1zM721 661h1v1h-1zM821 661h1v1h-1zM921 661h1v1h-1zM521 662h1v1h-1zM121 663h1v1h-1zM221 663h1v1h-1zM321 663h1v1h-1zM421 663h1v1h-1zM621 663h1v1h-1zM721 663h1v1h-1zM821 663h1v1h-1zM921 663h1v1h-1zM521 664h1v1h-1zM41 665h1v1h-1zM61 665h1v1h-1zM81 665h1v1h-1zM101 665h1v1h-1zM121 665h1v1h-1zM141 665h1v1h-1zM161 665h1v1h-1zM181 665h1v1h-1zM201 665h1v1h-1zM221 665h1v1h-1zM241 665h1v1h-1zM261 665h1v1h-1zM281 665h1v1h-1zM301 665h1v1h-1zM321 665h1v1h-1zM341 665h1v1h-1zM361 665h1v1h-1zM381 665h1v1h-1zM401 665h1v1h-1zM421 665h1v1h-1zM441 665h1v1h-1zM461 665h1v1h-1zM481 665h1v1h-1zM501 665h1v1h-1zM541 665h1v1h-1zM561 665h1v1h-1zM581 665h1v1h-1zM601 665h1v1h-1zM621 665h1v1h-1zM641 665h1v1h-1zM661 665h1v1h-1zM681 665h1v1h-1zM701 665h1v1h-1zM721 665h1v1h-1zM741 665h1v1h-1zM761 665h1v1h-1zM781 665h1v1h-1zM801 665h1v1h-1zM821 665h1v1h-1zM841 665h1v1h-1zM861 665h1v1h-1zM881 665h1v1h-1zM901 665h1v1h-1zM921 665h1v1h-1zM941 665h1v1h-1zM961 665h1v1h-1zM981 665h1v1h-1zM1001 665h1v1h-1zM521 666h1v1h-1zM41 667h1v1h-1zM61 667h1v1h-1zM81 667h1v1h-1zM101 667h1v1h-1zM121 667h1v1h-1zM141 667h1v1h-1zM161 667h1v1h-1zM181 667h1v1h-1zM201 667h1v1h-1zM221 667h1v1h-1zM241 667h1v1h-1zM261 667h1v1h-1zM281 667h1v1h-1zM301 667h1v1h-1zM321 667h1v1h-1zM341 667h1v1h-1zM361 667h1v1h-1zM381 667h1v1h-1zM401 667h1v1h-1zM421 667h1v1h-1zM441 667h1v1h-1zM461 667h1v1h-1zM481 667h1v1h-1zM501 667h1v1h-1zM541 667h1v1h-1zM561 667h1v1h-1zM581 667h1v1h-1zM601 667h1v1h-1zM621 667h1v1h-1zM641 667h1v1h-1zM661 667h1v1h-1zM681 667h1v1h-1zM701 667h1v1h-1zM721 667h1v1h-1zM741 667h1v1h-1zM761 667h1v1h-1zM781 667h1v1h-1zM801 667h1v1h-1zM821 667h1v1h-1zM841 667h1v1h-1zM861 667h1v1h-1zM881 667h1v1h-1zM901 667h1v1h-1zM921 667h1v1h-1zM941 667h1v1h-1zM961 667h1v1h-1zM981 667h1v1h-1zM1001 667h1v1h-1z"/><path fill="#00f0f0" d="M21 365h7v3h-7zM28 365h1v2h-1zM29 365h6v3h-6zM35 365h1v4h-1zM36 365h2v3h-2zM38 365h1v2h-1zM39 365h1v4h-1zM40 365h3v2h-3zM43 365h1v3h-1zM44 365h1v2h-1zM45 365h2v3h-2zM47 365h1v2h-1zM48 365h3v3h-3zM51 365h1v4h-1zM52 365h13v3h-13zM65 365h1v2h-1zM66 365h2v4h-2zM68 365h4v2h-4zM72 365h1v4h-1zM73 365h26v3h-26zM99 365h6v2h-6zM105 365h7v3h-7zM112 365h1v2h-1zM113 365h16v3h-16zM129 365h1v2h-1zM130 365h1v4h-1zM131 365h8v3h-8zM139 365h1v4h-1zM140 365h1v3h-1zM141 367h4v1h-4zM145 365h2v3h-2zM147 365h5v2h-5zM152 365h4v3h-4zM156 367h1v1h-1zM157 365h3v3h-3zM160 367h5v1h-5zM165 365h1v3h-1zM166 367h1v1h-1zM167 365h1v3h-1zM168 365h2v4h-2zM170 365h3v3h-3zM173 365h1v2h-1zM174 365h8v3h-8zM182 365h1v4h-1zM183 365h2v3h-2zM185 367h2v2h-2zM187 367h4v1h-4zM191 365h2v3h-2zM193 367h4v1h-4zM197 365h1v4h-1zM198 367h3v2h-3zM201 367h2v1h-2zM203 367h3v2h-3zM206 367h1v1h-1zM207 365h1v3h-1zM208 367h4v1h-4zM212 365h1v3h-1zM213 365h1v4h-1zM214 367h2v1h-2zM216 365h4v3h-4zM220 367h8v1h-8zM228 365h1v4h-1zM229 365h1v3h-1zM230 367h15v1h-15zM245 365h1v3h-1zM246 367h7v1h-7zM253 365h1v3h-1zM254 367h1v1h-1zM255 365h1v4h-1zM256 367h3v1h-3zM259 365h1v4h-1zM260 367h2v1h-2zM262 365h1v3h-1zM263 367h1v1h-1zM264 367h2v2h-2zM266 367h2v1h-2zM268 365h1v3h-1zM269 367h1v1h-1zM270 367h4v2h-4zM274 367h2v1h-2zM276 365h1v3h-1zM277 367h2v1h-2zM279 365h2v4h-2zM281 367h1v2h-1zM282 365h1v3h-1zM283 367h5v1h-5zM288 365h1v3h-1zM289 367h3v1h-3zM292 365h1v3h-1zM293 367h1v2h-1zM294 365h3v3h-3zM297 367h3v1h-3zM300 367h2v2h-2zM302 367h1v3h-1zM303 367h9v2h-9zM312 365h2v4h-2zM314 367h2v2h-2zM316 365h1v5h-1zM317 365h4v4h-4zM321 367h37v2h-37zM358 365h3v4h-3zM361 367h1v2h-1zM362 365h2v4h-2zM364 367h25v2h-25zM389 365h1v4h-1zM390 367h2v2h-2zM392 365h1v4h-1zM393 367h2v2h-2zM395 365h1v4h-1zM396 367h1v3h-1zM397 365h3v4h-3zM400 367h2v2h-2zM402 365h2v4h-2zM404 367h3v2h-3zM407 365h3v4h-3zM410 367h9v2h-9zM419 365h2v4h-2zM421 367h13v2h-13zM434 365h1v4h-1zM435 367h1v2h-1zM436 365h3v4h-3zM439 367h1v2h-1zM440 365h2v4h-2zM442 367h1v2h-1zM443 365h1v4h-1zM444 367h2v2h-2zM446 365h2v4h-2zM448 367h3v2h-3zM451 365h1v4h-1zM452 367h6v2h-6zM458 365h2v4h-2zM460 367h1v2h-1zM461 365h2v4h-2zM463 367h2v2h-2zM465 367h1v3h-1zM466 367h16v2h-16zM482 365h1v4h-1zM483 367h2v2h-2zM485 365h5v4h-5zM490 367h12v2h-12zM502 367h2v3h-2zM504 367h5v2h-5zM509 365h2v4h-2zM511 367h3v2h-3zM514 365h1v4h-1zM515 365h1v5h-1zM516 367h1v3h-1zM517 367h5v2h-5zM522 367h1v3h-1zM523 367h14v2h-14zM537 365h1v4h-1zM538 367h4v2h-4zM542 365h1v4h-1zM543 367h7v2h-7zM550 348h9v2h-9zM559 347h1v4h-1zM560 346h2v4h-2zM562 345h1v4h-1zM563 344h1v5h-1zM564 344h1v4h-1zM565 343h1v4h-1zM566 342h1v4h-1zM567 341h1v5h-1zM568 341h1v4h-1zM569 340h1v3h-1zM570 339h1v3h-1zM571 338h1v4h-1zM572 338h1v3h-1zM573 337h1v3h-1zM574 336h1v3h-1zM575 335h1v4h-1zM576 335h1v3h-1zM577 334h1v3h-1zM578 333h1v4h-1zM579 333h1v3h-1zM580 332h1v3h-1zM581 331h1v3h-1zM582 330h1v4h-1zM583 330h1v3h-1zM584 329h1v4h-1zM585 328h1v3h-1zM586 327h1v4h-1zM587 327h1v3h-1zM588 326h1v3h-1zM589 325h1v4h-1zM590 324h1v4h-1zM591 324h1v3h-1zM592 323h1v3h-1zM593 322h1v5h-1zM594 322h1v4h-1zM595 321h1v4h-1zM596 320h1v4h-1zM597 319h1v5h-1zM598 319h1v4h-1zM599 318h1v4h-1zM600 317h1v3h-1zM601 316h1v4h-1zM602 316h1v3h-1zM603 315h1v3h-1zM604 315h3v2h-3zM607 314h1v3h-1zM608 315h1v2h-1zM609 316h1v1h-1zM610 315h1v2h-1zM611 315h1v3h-1zM612 316h1v1h-1zM613 315h1v2h-1zM614 316h2v2h-2zM616 315h2v2h-2zM618 316h3v1h-3zM621 315h7v2h-7zM628 316h2v1h-2zM630 315h2v2h-2zM632 316h1v1h-1zM633 315h3v3h-3zM636 315h13v2h-13zM649 316h1v2h-1zM650 315h2v3h-2zM652 315h3v2h-3zM655 316h1v1h-1zM656 315h2v2h-2zM658 316h3v1h-3zM661 315h2v2h-2zM663 316h1v1h-1zM664 315h1v2h-1zM665 316h1v1h-1zM666 315h1v2h-1zM667 316h6v1h-6zM673 316h2v2h-2zM675 316h2v1h-2zM677 315h1v2h-1zM678 316h1v2h-1zM679 316h5v1h-5zM684 316h2v2h-2zM686 317h1v1h-1zM687 316h4v2h-4zM691 317h1v1h-1zM692 316h9v2h-9zM701 317h1v2h-1zM702 316h8v2h-8zM710 315h2v3h-2zM712 317h1v1h-1zM713 316h1v2h-1zM714 315h2v3h-2zM716 316h1v2h-1zM717 317h1v1h-1zM718 316h2v2h-2zM720 316h1v3h-1zM721 316h1v2h-1zM722 316h1v3h-1zM723 315h1v3h-1zM724 316h4v2h-4zM728 317h1v1h-1zM729 316h1v2h-1zM730 315h1v3h-1zM731 316h13v2h-13zM744 316h3v3h-3zM747 316h1v2h-1zM748 317h1v1h-1zM749 316h18v2h-18zM767 315h1v3h-1zM768 316h3v2h-3zM771 317h1v1h-1zM772 316h4v2h-4zM776 317h15v1h-15zM791 317h1v2h-1zM792 317h1v1h-1zM793 317h5v2h-5zM798 317h5v1h-5zM803 316h1v2h-1zM804 317h2v1h-2zM806 317h1v2h-1zM807 317h1v3h-1zM808 317h8v2h-8zM816 318h2v1h-2zM818 317h2v2h-2zM820 317h1v3h-1zM821 317h2v2h-2zM823 317h1v3h-1zM824 318h3v1h-3zM827 317h1v2h-1zM828 318h1v1h-1zM829 317h2v3h-2zM831 317h1v2h-1zM832 318h1v1h-1zM833 317h2v2h-2zM835 318h1v1h-1zM836 317h1v2h-1zM837 318h1v1h-1zM838 317h1v2h-1zM839 318h1v1h-1zM840 316h1v3h-1zM841 318h1v1h-1zM842 317h3v2h-3zM845 317h1v3h-1zM846 317h2v2h-2zM848 316h1v3h-1zM849 317h1v2h-1zM850 317h1v3h-1zM851 317h1v2h-1zM852 317h1v3h-1zM853 317h3v2h-3zM856 317h1v3h-1zM857 317h15v2h-15zM872 317h1v3h-1zM873 317h2v2h-2zM875 317h2v3h-2zM877 317h5v2h-5zM882 318h2v1h-2zM884 317h1v2h-1zM885 318h1v1h-1zM886 317h2v2h-2zM888 316h1v3h-1zM889 317h6v2h-6zM895 316h1v3h-1zM896 317h2v3h-2zM898 318h8v1h-8zM906 317h1v2h-1zM907 318h7v1h-7zM914 318h1v2h-1zM915 318h12v1h-12zM927 317h2v2h-2zM929 318h6v2h-6zM935 318h1v3h-1zM936 318h10v2h-10zM946 319h1v1h-1zM947 317h1v3h-1zM948 318h1v2h-1zM949 319h1v1h-1zM950 318h1v2h-1zM951 319h1v1h-1zM952 318h3v2h-3zM955 319h1v1h-1zM956 318h9v2h-9zM965 318h1v3h-1zM966 318h2v2h-2zM968 318h1v3h-1zM969 319h1v2h-1zM970 318h5v2h-5zM975 319h2v2h-2zM977 318h1v3h-1zM978 318h4v2h-4zM982 319h1v1h-1zM983 318h5v2h-5zM988 318h2v3h-2zM990 318h8v2h-8zM998 319h3v1h-3zM1001 318h1v2h-1zM1002 318h1v3h-1zM1003 318h7v2h-7zM1010 318h1v3h-1zM1011 318h2v2h-2zM1013 318h1v3h-1zM1014 318h4v2h-4zM1018 319h1v1h-1zM1019 318h1v2h-1zM1020 319h1v2h-1z"/><path fill="#009c9c" d="M550 350h1v18h-1z"/><path fill="#f8f800" d="M21 608h500v2h-500zM521 558h7v1h-7zM528 556h1v3h-1zM529 558h3v1h-3zM532 556h2v3h-2zM534 558h1v1h-1zM535 556h20v3h-20zM555 556h5v4h-5zM560 556h10v3h-10zM570 556h3v4h-3zM573 556h3v3h-3zM576 556h5v4h-5zM581 556h10v3h-10zM591 556h1v4h-1zM592 556h1v3h-1zM593 556h2v4h-2zM595 556h5v3h-5zM600 556h3v4h-3zM603 556h48v3h-48zM651 558h7v1h-7zM658 556h11v3h-11zM669 558h3v1h-3zM672 556h5v3h-5zM677 558h4v1h-4zM681 556h4v3h-4zM685 558h6v1h-6zM691 557h1v2h-1zM692 558h2v1h-2zM694 557h2v2h-2zM696 558h5v1h-5zM701 556h1v3h-1zM702 558h3v1h-3zM705 556h10v3h-10zM715 558h6v1h-6zM721 556h1v3h-1zM722 558h4v1h-4zM726 556h3v3h-3zM729 558h1v1h-1zM730 557h1v2h-1zM731 558h1v1h-1zM732 556h25v3h-25zM757 558h7v1h-7zM764 556h9v3h-9zM773 558h1v1h-1zM774 556h7v3h-7zM781 558h1v1h-1zM782 556h3v3h-3zM785 558h6v1h-6zM791 556h7v3h-7zM798 558h2v1h-2zM800 556h5v3h-5zM805 558h1v1h-1zM806 556h7v3h-7zM813 558h1v1h-1zM814 556h2v3h-2zM816 558h10v1h-10zM826 556h1v3h-1zM827 558h7v1h-7zM834 556h4v3h-4zM838 558h7v1h-7zM845 556h1v3h-1zM846 558h1v1h-1zM847 556h2v3h-2zM849 558h6v1h-6zM855 556h2v3h-2zM857 558h11v1h-11zM868 556h5v3h-5zM873 558h1v1h-1zM874 556h2v3h-2zM876 558h5v1h-5zM881 556h4v3h-4zM885 558h5v1h-5zM890 556h4v3h-4zM894 558h23v1h-23zM917 556h2v3h-2zM919 558h3v1h-3zM922 556h1v3h-1zM923 558h1v1h-1zM924 556h3v3h-3zM927 558h9v1h-9zM936 556h1v3h-1zM937 558h1v1h-1zM938 556h4v3h-4zM942 558h7v1h-7zM949 556h4v3h-4zM953 558h4v1h-4zM957 556h1v3h-1zM958 558h2v1h-2zM960 556h1v3h-1zM961 558h1v1h-1zM962 556h1v3h-1zM963 558h1v1h-1zM964 556h7v3h-7zM971 558h20v1h-20zM991 556h2v3h-2zM993 558h3v1h-3zM996 556h2v3h-2zM998 558h10v1h-10zM1008 556h4v3h-4zM1012 558h1v1h-1zM1013 556h1v3h-1zM1014 558h5v1h-5zM1019 556h1v3h-1zM1020 558h1v1h-1z"/><path fill="#b8b800" d="M521 553h1v56h-1z"/>
</svg>

<!-- channel readout -->
<div class="box" style="left:20px;top:670px;width:554px;height:21px;"></div>
<div class="pill p1" style="left:26px;top:673px;background:#f8f800;">1</div>
<div class="t" style="left:68px;top:670px;color:#f8f800;letter-spacing:.7px;"><span class="one">1</span>0.0 V</div>
<div class="pill" style="left:165px;top:673px;background:#00f0f0;">2</div>
<div class="t" style="left:207px;top:670px;color:#00f0f0;letter-spacing:.7px;"><span class="one">1</span>.00mV</div>

<!-- timebase -->
<div class="box" style="left:582px;top:670px;width:148px;height:38px;"></div>
<div class="t" style="left:587.7px;top:670px;letter-spacing:1.05px;">20.0µs</div>
<div class="t" style="left:622.3px;top:687.2px;color:#ffa000;letter-spacing:.7px;">0.00000 s</div>

<!-- sample -->
<div class="box" style="left:737px;top:670px;width:107px;height:38px;"></div>
<div class="t" style="left:742.8px;top:670px;letter-spacing:1.25px;">50.0MS/s</div>
<div class="t" style="left:741.8px;top:687.2px;letter-spacing:1.15px;"><span class="one">1</span>0k points</div>

<!-- trigger -->
<div class="box" style="left:851px;top:670px;width:171px;height:38px;"></div>
<div class="pill p1" style="left:882px;top:673px;background:#f8f800;">1</div>
<div class="t" style="left:965px;top:670px;">4.80 V</div>

<!-- date -->
<div class="box" style="left:909px;top:729px;width:113px;height:37px;"></div>
<div class="t" style="left:914.2px;top:730.5px;"><span class="one">1</span>3 Mar  2023</div>
<div class="t" style="left:914.2px;top:746.2px;letter-spacing:.75px;"><span class="one">1</span>2:2<span class="one">1</span>:<span class="one">1</span>0</div>

<!-- buttons -->
<div class="btn" style="left:20px;"><div class="t" style="top:6.3px;">Mode</div><div class="t" style="top:23.3px;"><span class="hl">Average</span></div></div>
<div class="btn" style="left:138px;"><div class="t" style="top:-2.4px;">Record</div><div class="t" style="top:14.3px;">Length</div><div class="t" style="top:30.9px;"><span class="hl"><span class="one">1</span>0k</span></div></div>
<div class="btn tall" style="left:256px;"><div class="t" style="top:2px;letter-spacing:.3px;">Delay</div>
 <div class="abs onbox" style="left:11px;top:27px;width:32px;height:30px;"></div>
 <div class="t" style="top:29px;left:14.6px;width:auto;letter-spacing:1.6px;">On</div><div class="t" style="top:29px;left:72px;width:auto;letter-spacing:1.6px;">Off</div></div>
<div class="btn" style="left:374px;"><div class="t" style="top:-2.4px;">Set Horiz.</div><div class="t" style="top:14.3px;letter-spacing:.9px;">Position</div><div class="t" style="top:30.9px;">to 0 s</div></div>
<div class="btn" style="left:492px;"><div class="t" style="top:6.3px;">Waveform</div><div class="t" style="top:23.3px;">Display</div></div>
<div class="btn" style="left:610px;"><div class="t" style="top:6.3px;">XY Display</div><div class="t" style="top:23.3px;"><span class="hl">Off</span></div></div>
<svg class="abs" style="left:0;top:0;pointer-events:none" width="1024" height="768" viewBox="0 0 1024 768" shape-rendering="crispEdges">
<path fill="#f8f800" d="M283 7h478v1h-478z"/><path fill="#f8f800" fill-opacity=".35" d="M283 8h478v1h-478z"/><path fill="#a09898" d="M281 1h3v2h-1v10h1v2h-3z M763 1h-3v2h1v10h-1v2h3z"/><g shape-rendering="geometricPrecision"><path fill="#ffa000" d="M518 1h7.4l-3.7 3.8z"/><path fill="#ffa000" d="M518.5 5h5.5q1.4 0 1.4 1.4v8q0 1.4-1.4 1.4h-5.5q-1.4 0-1.4-1.4v-8q0-1.4 1.4-1.4z"/><path fill="#000" d="M518.8 6h5.2v1.4h-1.6v7.2h-2v-7.2h-1.6z"/><path fill="#ffa000" d="M515.8 17h11.4l-5.7 6z"/><path fill="#ffa000" d="M516.5 23.8h9.2q1.4 0 1.4 1.4v10.2l-5.7 3.6-6.3-3.6v-10.2q0-1.4 1.4-1.4z"/><path fill="#000" d="M516.3 25.2h9.8v1.6h-3.8v9h-2.2v-9h-3.8z"/></g><g shape-rendering="geometricPrecision"><path fill="#020402" stroke="#00f0f0" stroke-width=".9" d="M.5 318l1.5-1.5h11l6.3 8.2-6.3 8.3h-11l-1.5-1.5z"/><path fill="#f8f800" d="M-1 600.5h14l6.5 8.2-6.5 8.3h-14z"/><path fill="none" stroke="#fff" stroke-width="1" d="M0 601h12.5"/><path fill="none" stroke="#000" stroke-width="1.2" d="M0 617h13l6.3-8"/><path fill="#f8f800" d="M1010 577.5l6.2-5.6v11.2z"/><path fill="#f8f800" d="M1016 576.8h5v1.6h-5z"/><rect x="587" y="691" width="12.2" height="13" rx="2" fill="#ffa000"/><path fill="#000" d="M588.4 692.3h9.6v1.8h-3.7v9h-2.3v-9h-3.6z"/><path fill="none" stroke="#ffa000" stroke-width="1.2" d="M600.2 697.6h7"/><path fill="#ffa000" d="M604.6 693.8l4.6 3.8-4.6 3.8z"/><path fill="#ffa000" d="M610 694.2h11.2l-5.6 6z"/><path fill="none" stroke="#fff" stroke-width="1.5" d="M920 685h4.6l3.6-9.4h4.2"/></g><g shape-rendering="geometricPrecision" font-family="DejaVu Sans,Liberation Sans,sans-serif"><text x="3.2" y="330.2" font-size="14.5" fill="#00f0f0" stroke="#00f0f0" stroke-width=".25">2</text><text x="3.7" y="614" font-size="14.4" font-weight="bold" font-family="NanumGothic,Liberation Sans,sans-serif" fill="#000" stroke="#000" stroke-width=".5">1</text><text transform="translate(143.4 682) scale(.62 1)" font-size="9.5" fill="#f8f800">B</text><text transform="translate(147.3 686.2) scale(.62 1)" font-size="9.5" fill="#f8f800">W</text><text transform="translate(282.4 682) scale(.62 1)" font-size="9.5" fill="#00f0f0">B</text><text transform="translate(286.3 686.2) scale(.62 1)" font-size="9.5" fill="#00f0f0">W</text></g>
</svg>
</body>
</html>
